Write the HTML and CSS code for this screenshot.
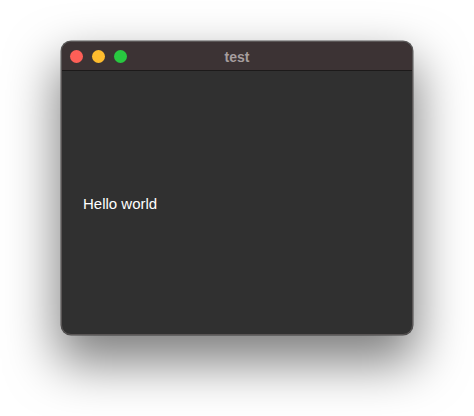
FILE: index.html
```html
<!DOCTYPE html>
<html>
<head>
<meta charset="utf-8">
<link rel="stylesheet" href="styles.css">
</head>
<body>
<div class="window">
  <div class="titlebar">
    <div class="lights">
      <span class="light red"></span>
      <span class="light yellow"></span>
      <span class="light green"></span>
    </div>
    <div class="title">test</div>
  </div>
  <div class="content">
    <p class="hello">Hello world</p>
  </div>
</div>
</body>
</html>
```
FILE: styles.css
```css
html, body {
  margin: 0;
  background: #ffffff;
}
body {
  box-sizing: border-box;
  width: 474px;
  height: 416px;
  overflow: hidden;
  padding: 41px 0 0 61px;
  font-family: "Liberation Sans", Arial, sans-serif;
}
.window {
  width: 352px;
  height: 294px;
  box-sizing: border-box;
  border-radius: 10px;
  background: #303030;
  border: 1px solid #5a5656;
  box-shadow: 0 24px 50px 4px rgba(0, 0, 0, 0.5), 0 0 0 0.5px rgba(0,0,0,0.6);
  display: flex;
  flex-direction: column;
  overflow: hidden;
}
.titlebar {
  position: relative;
  height: 28px;
  flex: none;
  background: #3c3334;
  border-bottom: 1px solid #1c1a1a;
  display: flex;
  align-items: center;
  justify-content: center;
}
.lights {
  position: absolute;
  left: 8px;
  top: 8px;
  display: flex;
  gap: 9px;
}
.light {
  width: 13px;
  height: 13px;
  border-radius: 50%;
  display: block;
}
.red { background: #fe5f57; }
.yellow { background: #febc2e; }
.green { background: #28c840; }
.title {
  font-size: 14px;
  font-weight: bold;
  color: #a69e9e;
  margin-top: 1px;
}
.content {
  flex: 1;
  display: flex;
  align-items: center;
  padding-left: 21px;
}
.hello {
  margin: 0;
  font-size: 15px;
  color: #ffffff;
  margin-top: 2px;
}
```
